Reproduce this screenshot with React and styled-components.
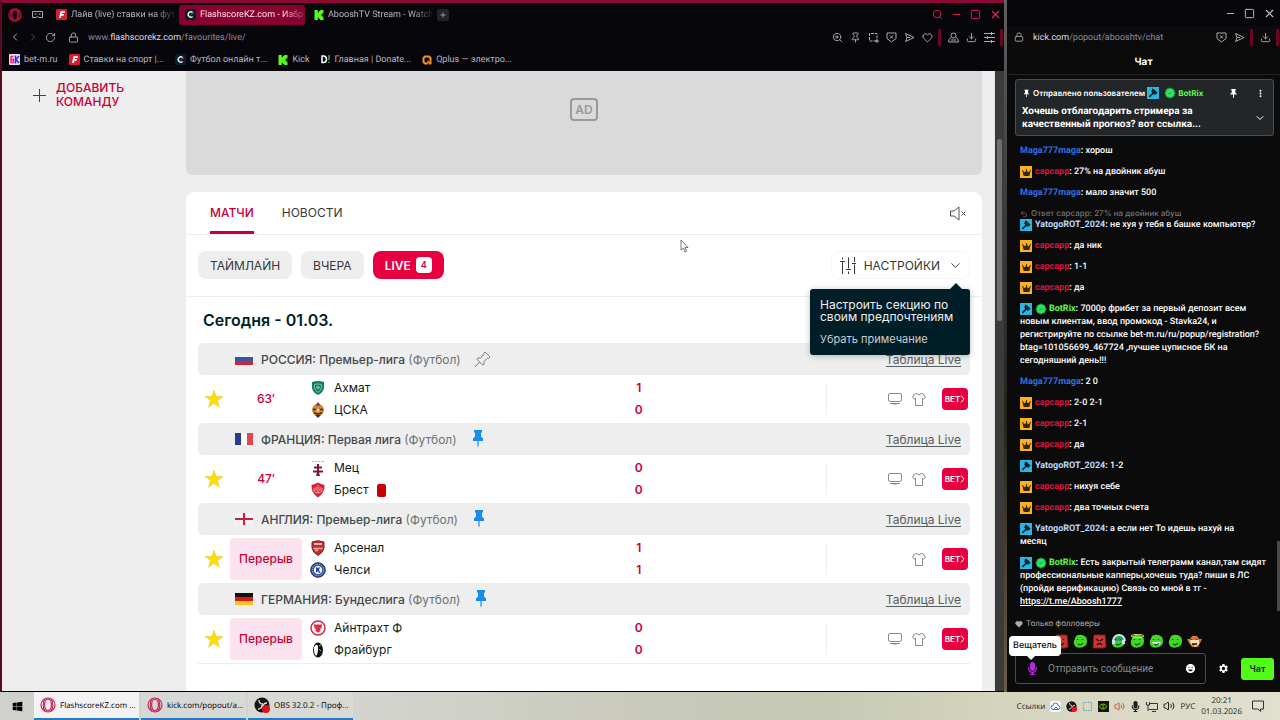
import React from 'react'
import styled, { createGlobalStyle, css } from 'styled-components'
import {
    BadgeCheck,
    ChevronDown,
    ChevronLeft,
    ChevronRight,
    Download,
    Heart,
    Lock,
    Minus,
    Pin,
    Plus,
    RotateCw,
    Search,
    Square,
    SquareDashed,
    Undo2,
    Volume2,
    X,
    ZoomIn,
} from 'lucide-react'
import { FaWindows } from 'react-icons/fa'
import { FaCrown, FaMicrophone } from 'react-icons/fa6'
import { MdEmojiEmotions, MdMoreVert, MdPushPin, MdSettings } from 'react-icons/md'

const GlobalStyle = createGlobalStyle`
    * {
        box-sizing: border-box;
    }
    body {
        margin: 0;
        font-family: Inter, 'Liberation Sans', sans-serif;
        background-color: #08080c;
        overflow: hidden;
    }
    button,
    input {
        font-family: inherit;
        border: none;
        padding: 0;
        background: none;
        cursor: pointer;
    }
    a {
        color: inherit;
        text-decoration: none;
    }
    svg {
        display: block;
        flex-shrink: 0;
    }
`

// Desktop
const Desktop = styled.div`
    min-height: 100vh;
    display: grid;
    grid-template-rows: minmax(0, 1fr) 28px;
`
const Windows = styled.div`
    display: grid;
    grid-template-columns: minmax(0, 1fr) 273px;
    gap: 3px;
    background: linear-gradient(#635f5d, #3a3d3c 30%, #24241c 60%, #6c5c45);
    max-height: calc(100vh - 28px);
`

// Browser window
const Browser = styled.section`
    display: flex;
    flex-direction: column;
    min-width: 0;
    min-height: 0;
    background-color: #07070b;
    border-left: 2px solid #5c0a24;
    border-top: 3px solid #8c0a35;
    border-bottom: 1px solid #000;
`
const TabBar = styled.div`
    height: 23px;
    display: flex;
    align-items: center;
    gap: 3px;
    padding: 0 2px 0 6px;
    color: #fa1e4e;
`
const BarStart = styled.div`
    width: 39px;
    display: flex;
    align-items: center;
    gap: 10px;
`
const Tab = styled.button`
    width: 126px;
    height: 20px;
    display: flex;
    align-items: center;
    gap: 4px;
    padding: 0 2px 0 6px;
    border-radius: 3px;
    text-align: left;
    color: ${(props) => (props.$active ? '#ffe0e8' : '#b9b6c6')};
    background-color: ${(props) => (props.$active ? '#87002f' : 'transparent')};
`
const TabText = styled.span`
    flex: 1;
    overflow: hidden;
    white-space: nowrap;
    font-family: Roboto, sans-serif;
    font-size: 9px;
    line-height: 14px;
    padding-top: 1px;
    text-rendering: geometricPrecision;
    mask-image: linear-gradient(90deg, #000 80%, rgba(0, 0, 0, 0.2));
`
const NewTab = styled.button`
    width: 12px;
    height: 12px;
    display: grid;
    place-items: center;
    border-radius: 2px;
    color: #c5c2d0;
    background-color: #23212c;
`
const BarEnd = styled.div`
    margin-left: auto;
    display: flex;
    align-items: center;
    gap: ${(props) => props.$gap || 7}px;
`
const IconButton = styled.button`
    display: grid;
    place-items: center;
    color: inherit;
`
const AddressBar = styled.div`
    height: 22px;
    display: flex;
    align-items: center;
    gap: 6px;
    padding: 0 1px 0 7px;
    color: #aeabba;
`
const Url = styled.a`
    margin-left: 3px;
    font-family: Roboto, sans-serif;
    font-size: 9px;
    line-height: 14px;
    padding-top: 1px;
    text-rendering: geometricPrecision;
    color: #8f88aa;
    b {
        font-weight: 400;
        color: #dcd9e6;
    }
`
const RedBar = styled.span`
    width: 3px;
    height: 17px;
    margin-left: -2px;
    border-radius: 1px;
    background-color: #6e0329;
`
const Bookmarks = styled.nav`
    height: 23px;
    display: flex;
    align-items: center;
    gap: 11px;
    padding: 0 7px;
`
const Bookmark = styled.a`
    display: flex;
    align-items: center;
    gap: 4px;
    font-family: Roboto, sans-serif;
    font-size: 9px;
    line-height: 14px;
    text-rendering: geometricPrecision;
    color: #b8b5c5;
    white-space: nowrap;
`

// Page
const Page = styled.div`
    flex: 1;
    min-height: 0;
    display: grid;
    grid-template-columns: 184px minmax(0, 1fr) 9px;
    background-color: #eee;
`
const Aside = styled.aside`
    padding: 10px 0 0 31px;
`
const AddTeam = styled.button`
    display: flex;
    align-items: center;
    gap: 10px;
    width: 110px;
    text-align: left;
    font-size: 12px;
    font-weight: 500;
    line-height: 14px;
    color: #c80037;
`
const Content = styled.main`
    min-width: 0;
    padding-right: 12px;
    display: flex;
    flex-direction: column;
    gap: 17px;
    border-right: 1px solid #e4e4e4;
`
const Ad = styled.div`
    height: 104px;
    display: grid;
    place-items: center;
    padding-bottom: 27px;
    border-radius: 0 0 6px 6px;
    background-color: #dadada;
`
const AdLabel = styled.span`
    padding: 0 3px;
    border: 2px solid #999;
    border-radius: 4px;
    font-size: 12px;
    font-weight: 600;
    line-height: 19px;
    color: #999;
`
const Card = styled.div`
    flex: 1;
    border-radius: 9px 9px 0 0;
    background-color: #fff;
`
const CardTabs = styled.div`
    height: 43px;
    display: flex;
    align-items: stretch;
    gap: 28px;
    padding: 0 15px 0 24px;
    border-bottom: 1px solid #eee;
`
const CardTab = styled.button`
    font-size: 12px;
    font-weight: ${(props) => (props.$active ? 500 : 400)};
    line-height: 36px;
    color: ${(props) => (props.$active ? '#c80037' : '#33383b')};
    border-top: 3px solid transparent;
    border-bottom: 3px solid ${(props) => (props.$active ? '#c80037' : 'transparent')};
`
const Filters = styled.div`
    height: 62px;
    display: flex;
    align-items: center;
    gap: 9px;
    padding: 0 12px 1px;
    border-bottom: 1px solid #eee;
`
const Filter = styled.button`
    height: 28px;
    display: flex;
    align-items: center;
    gap: 5px;
    padding: 0 12px;
    border-radius: 8px;
    font-size: 12px;
    font-weight: ${(props) => (props.$active ? 600 : 400)};
    color: ${(props) => (props.$active ? '#fff' : '#33383b')};
    background-color: ${(props) => (props.$active ? '#e6003f' : '#eee')};
`
const Count = styled.span`
    width: 16px;
    border-radius: 4px;
    font-size: 9px;
    line-height: 16px;
    color: #c80037;
    background-color: #fff;
`
const SettingsWrapper = styled.div`
    position: relative;
    margin-left: auto;
`
const Settings = styled.button`
    height: 28px;
    display: flex;
    align-items: center;
    gap: 8px;
    padding: 0 6px 0 8px;
    border: 1px solid #f5f5f5;
    border-radius: 8px;
    font-size: 12px;
    color: #33383b;
`
const Hint = styled.div`
    position: absolute;
    top: 38px;
    right: 0;
    width: 160px;
    padding: 10px 10px 8px;
    border-radius: 3px;
    background-color: #001e28;
    box-shadow: 0 1px 6px rgba(0, 0, 0, 0.25);
    font-size: 12px;
    line-height: 12px;
    color: #eee;
    z-index: 2;
    &::before {
        content: '';
        position: absolute;
        top: -6px;
        right: 8px;
        border: solid transparent;
        border-width: 0 6px 6px;
        border-bottom-color: #001e28;
    }
    p {
        margin: 0;
    }
`
const DismissHint = styled.button`
    margin-top: 8px;
    font-size: 11px;
    line-height: 16px;
    color: #c8cdd0;
`
const DayTitle = styled.h2`
    margin: 0;
    padding: 0 17px;
    font-size: 16px;
    font-weight: 600;
    line-height: 46px;
    color: #001e28;
`
const Leagues = styled.div`
    margin: 0 12px;
    border-bottom: 1px solid #eee;
`
const LeagueRow = styled.div`
    height: 32px;
    display: flex;
    align-items: center;
    gap: 8px;
    padding: 0 9px 0 37px;
    border-radius: 5px;
    background-color: #eee;
    font-size: 12px;
    color: #555e61;
    > a {
        margin-left: auto;
        text-decoration: underline;
        text-underline-offset: 2px;
    }
`
const LeagueName = styled.span`
    font-weight: 500;
    margin-right: 5px;
    color: #41494c;
    small {
        font-size: 12px;
        font-weight: 400;
        color: #6c7376;
    }
`
const MatchRow = styled.div`
    height: 48px;
    display: grid;
    grid-template-columns: 32px 72px minmax(0, 11fr) 16px minmax(0, 6fr) 144px;
    align-items: center;
    font-size: 12px;
    line-height: 22px;
    color: #101b20;
`
const StarButton = styled(IconButton)`
    color: #ffdc00;
`
const Stage = styled.span`
    height: 42px;
    display: grid;
    place-items: center;
    border-radius: 4px;
    font-weight: 500;
    color: #c80037;
    background-color: ${(props) => (props.$paused ? '#fae2ee' : 'transparent')};
`
const Team = styled.div`
    display: flex;
    align-items: center;
    gap: 8px;
    padding-left: 8px;
`
const RedCard = styled.span`
    width: 9px;
    height: 13px;
    border-radius: 2px;
    background-color: #c80000;
`
const Scores = styled.div`
    text-align: center;
    font-weight: 600;
    color: #c80037;
`
const MatchLinks = styled.div`
    grid-column: 6;
    height: 32px;
    display: flex;
    align-items: center;
    justify-content: flex-end;
    gap: 10px;
    padding-right: 2px;
    border-left: 1px solid #eee;
    color: #858c8e;
`
const Bet = styled.button`
    width: 26px;
    height: 22px;
    margin-left: 6px;
    display: flex;
    align-items: center;
    justify-content: center;
    border-radius: 4px;
    font-size: 8px;
    font-weight: 600;
    color: #fff;
    background-color: #e6003f;
`
const ScrollTrack = styled.div`
    padding-top: 68px;
    background-color: #3b3b3b;
`
const ScrollThumb = styled.div`
    width: 5px;
    height: 182px;
    margin: 0 auto;
    border-radius: 2px;
    background-color: #6f6f6f;
`

// Chat window
const Chat = styled.section`
    min-height: 0;
    display: flex;
    flex-direction: column;
    background-color: #0b0b0b;
    color: #fff;
    text-rendering: geometricPrecision;
`
const ChatControls = styled.div`
    height: 26px;
    display: flex;
    align-items: center;
    justify-content: flex-end;
    gap: 8px;
    padding-right: 4px;
    background-color: #07070b;
    color: #c7c4cf;
`
const ChatTitle = styled.h1`
    margin: 0;
    height: 27px;
    padding-top: 2px;
    text-align: center;
    font-size: 10px;
    font-weight: 700;
    line-height: 24px;
    border-bottom: 1px solid #242424;
`
const Pinned = styled.div`
    margin: 4px 6px 0 8px;
    padding: 5px 7px 4px 6px;
    border: 1px solid #4a4e52;
    border-radius: 3px;
    background-color: #232628;
    font-family: Roboto, sans-serif;
    font-size: 10px;
    font-weight: 700;
    line-height: 13px;
`
const PinnedHead = styled.div`
    height: 16px;
    display: flex;
    align-items: center;
    gap: 2px;
    margin-bottom: 4px;
    font-family: Inter, sans-serif;
    font-size: 8px;
    font-weight: 600;
`
const PinnedBody = styled.div`
    display: flex;
    align-items: center;
    justify-content: space-between;
    p {
        margin: 0;
        width: 190px;
    }
`
const PinnedActions = styled.span`
    margin-left: auto;
    display: flex;
    gap: 16px;
`
const Messages = styled.div`
    flex: 1;
    min-height: 0;
    overflow: hidden;
    display: flex;
    flex-direction: column;
    justify-content: flex-end;
    gap: 8px;
    padding: 0 7px 0 13px;
    border-right: 3px solid transparent;
    font-family: Roboto, sans-serif;
    font-size: 9px;
    font-weight: 500;
    line-height: 13px;
    white-space: pre-line;
`
const ReplyNote = styled.div`
    display: flex;
    align-items: center;
    gap: 3px;
    font-family: Inter, sans-serif;
    font-size: 8px;
    line-height: 11px;
    color: #757575;
`
const Nick = styled.b`
    font-weight: 700;
    color: ${(props) => props.$color};
`
const badgeBox = css`
    width: 12px;
    height: 12px;
    display: inline-grid;
    place-items: center;
    vertical-align: top;
`
const CrownBox = styled.span`
    ${badgeBox}
    margin-right: 3px;
    color: #3a2500;
    background-color: #f9b21d;
`
const HammerBox = styled.span`
    ${badgeBox}
    margin-right: 3px;
    color: #06202c;
    background-color: #2bb5e0;
`
const CheckBox = styled.span`
    ${badgeBox}
    margin-right: 2px;
`
const MessageLink = styled.a`
    text-decoration: underline;
`
const ChatFooter = styled.div`
    position: relative;
    padding: 8px 6px 8px 8px;
`
const FollowersOnly = styled.div`
    display: flex;
    align-items: center;
    gap: 3px;
    font-size: 8px;
    line-height: 13px;
    color: #a9acb0;
`
const Emotes = styled.div`
    display: flex;
    gap: 4px;
    height: 16px;
    margin: 3px 0 4px 39px;
    button {
        width: 15px;
    }
`
const SendRow = styled.form`
    display: flex;
    align-items: center;
    gap: 12px;
`
const MessageBox = styled.div`
    flex: 1;
    min-width: 0;
    height: 31px;
    display: flex;
    align-items: center;
    gap: 9px;
    padding: 0 9px 0 10px;
    border: 1px solid #4a4d50;
    border-radius: 3px;
    input {
        flex: 1;
        min-width: 0;
        outline: none;
        font-family: Roboto, sans-serif;
        font-size: 10px;
        color: #fff;
    }
    input::placeholder {
        color: #85888c;
        opacity: 1;
    }
`
const SendButton = styled.button`
    width: 33px;
    height: 22px;
    border-radius: 3px;
    font-size: 9px;
    font-weight: 600;
    color: #0b2600;
    background-color: #53fc18;
`
const RoleHint = styled.div`
    position: absolute;
    top: 27px;
    left: 2px;
    padding: 0 4px;
    border-radius: 4px;
    font-size: 9px;
    font-weight: 500;
    line-height: 20px;
    color: #111;
    background-color: #fff;
    &::after {
        content: '';
        position: absolute;
        top: 20px;
        left: 18px;
        border: solid transparent;
        border-width: 4px 4px 0;
        border-top-color: #fff;
    }
`
const ChatScroll = styled.span`
    position: absolute;
    top: -68px;
    right: 0;
    width: 3px;
    height: 70px;
    background-color: #494949;
`

// Taskbar
const Taskbar = styled.footer`
    display: flex;
    align-items: stretch;
    background: linear-gradient(90deg, #cfd1cd, #d3d4cf 28%, #c9cabb 50%, #c5c9b4 64%, #d5d4bd 78%, #e1dfce);
    font-family: 'Open Sans', 'Noto Sans', sans-serif;
    font-size: 8px;
    text-rendering: geometricPrecision;
    color: #1c1c1c;
`
const StartButton = styled(IconButton)`
    width: 34px;
    color: #000;
`
const TaskButton = styled.button`
    width: 105px;
    margin-right: 2px;
    display: flex;
    align-items: center;
    gap: 4px;
    padding-left: 6px;
    font-size: 8px;
    text-rendering: geometricPrecision;
    white-space: nowrap;
    border-bottom: 2px solid #2878c8;
    background-color: ${(props) => (props.$active ? '#f2f3f2' : 'rgba(255, 255, 255, 0.15)')};
`
const Tray = styled.div`
    margin-left: auto;
    display: flex;
    align-items: center;
    gap: 5px;
    padding-right: 16px;
`
const Clock = styled.time`
    margin: 0 5px 0 1px;
    text-align: center;
    line-height: 11px;
`
const Pointer = styled.svg`
    position: fixed;
    left: 680px;
    top: 239px;
    z-index: 5;
`

// Logos and small drawings
const OperaLogo = ({ size = 14, color = '#d3123f' }) => (
    <svg width={size} height={size} viewBox="0 0 16 16" fill="none" stroke={color} strokeWidth="1.2">
        <circle cx="8" cy="8" r="7" />
        <ellipse cx="8" cy="8" rx="3.4" ry="5.8" />
        <path d="M5 1.9C2.6 5 2.6 11 5 14.1M11 1.9c2.4 3.1 2.4 9.1 0 12.2" />
    </svg>
)

const GameIcon = () => (
    <svg width="11" height="10" viewBox="0 0 11 10" fill="none" stroke="#aaa7b7">
        <path d="M.5 1.500h10v6H7L5.500 6.500 4 7.500H.5z" />
        <path d="M2.500 4h2M6.500 4h2" />
    </svg>
)

const PlaneIcon = () => (
    <svg width="11" height="11" viewBox="0 0 11 11" fill="none" stroke="currentColor" strokeLinejoin="round">
        <path d="M1.500 1.500 10 5.500l-8.500 4 1.500-4zM3 5.500h3" />
    </svg>
)

const ShieldIcon = () => (
    <svg width="11" height="11" viewBox="0 0 11 11" fill="none" stroke="currentColor">
        <path d="M1 1h9v5.500L5.500 10 1 6.500zM4 3.500l3 3M7 3.500l-3 3" />
    </svg>
)

const SnapshotIcon = () => (
    <svg width="11" height="11" viewBox="0 0 11 11" fill="none" stroke="currentColor">
        <path d="M8.500 9H1.500V1.500h7.500V7" strokeDasharray="3 1" />
        <path d="M7 9h4M9 7v4" />
    </svg>
)

const ProfileIcon = () => (
    <svg width="11" height="11" viewBox="0 0 11 11" fill="none" stroke="currentColor">
        <circle cx="5.500" cy="3.500" r="2.500" />
        <path d="M3 5.500.8 7.500v2.500h9.400V7.500L8 5.500M3 8h5" />
    </svg>
)

const Favicon = ({ type }) => {
    if (type === 'fonbet') {
        return (
            <svg width="11" height="11" viewBox="0 0 11 11">
                <rect width="11" height="11" rx="1.500" fill="#d91e33" />
                <path d="M3 9 4.500 2.200H9L8.600 4H6l-.3 1.100h2.300L7.600 6.700H5.300L4.800 9z" fill="#fff" />
            </svg>
        )
    }
    if (type === 'flash') {
        return (
            <svg width="11" height="11" viewBox="0 0 11 11">
                <rect width="11" height="11" rx="2" fill="#06202a" />
                <path d="M7.600 3.600A2.600 2.600 0 1 0 7.600 7.400" fill="none" stroke="#eee" strokeWidth="1.400" />
                <path d="M6 5.500 9 3.700" stroke="#d91e53" />
            </svg>
        )
    }
    if (type === 'kick') {
        return (
            <svg width="10" height="10" viewBox="0 0 10 10" fill="#53fc18">
                <path d="M.5 0h3.300v2.300H5V1.100h1.200V0h3.300v3.300H8.300v1.200H7.200v1.100h1.100v1.100h1.200V10H6.200V8.900H5V7.700H3.800V10H.5z" />
            </svg>
        )
    }
    if (type === 'bet') {
        return (
            <svg width="11" height="11" viewBox="0 0 11 11">
                <rect width="11" height="11" rx="1" fill="#e9ddff" />
                <path d="M4.500 2.500H2v6h2.500v-3H2" fill="none" stroke="#ee2456" strokeWidth="1.400" />
                <path d="M6.500 1.500v8M10 2 7 5.500 10 9" fill="none" stroke="#4123d8" strokeWidth="1.500" />
            </svg>
        )
    }
    if (type === 'donate') {
        return (
            <svg width="10" height="9" viewBox="0 0 10 9" fill="none">
                <path d="M1 1v6.500h1.500c4 0 4-6.500 0-6.500z" stroke="#fff" strokeWidth="1.500" />
                <path d="M8 0v5M8 6.500V8" stroke="#20a447" strokeWidth="1.700" />
            </svg>
        )
    }
    return (
        <svg width="10" height="10" viewBox="0 0 10 10" fill="none">
            <path d="M6 8.500H3L1.500 7V3L3 1.500h4L8.500 3v6" stroke="#f7931e" strokeWidth="2" />
            <path d="m5.500 6 3 3.500" stroke="#f7931e" strokeWidth="1.500" />
        </svg>
    )
}

const Hammer = () => (
    <svg width="10" height="10" viewBox="0 0 10 10" fill="currentColor">
        <path d="M4.300.6 6 1.200l3.300 3-.2 1.600-1.300-.4-.7 1.800-1.500-1.500L2 9.400.7 8.300l3.800-3.500-1.300-1.100z" />
    </svg>
)

const Badge = ({ type }) => {
    if (type === 'crown') {
        return (
            <CrownBox>
                <FaCrown size={9} />
            </CrownBox>
        )
    }
    if (type === 'hammer') {
        return (
            <HammerBox>
                <Hammer />
            </HammerBox>
        )
    }
    return (
        <CheckBox>
            <BadgeCheck size={12} fill="#2ee563" stroke="#1b9440" strokeWidth={2} />
        </CheckBox>
    )
}

const Flag = ({ country }) => (
    <svg width="18" height="12" viewBox="0 0 18 12">
        <rect width="18" height="12" fill={country === 'en' || country === 'ru' ? '#f4f4f4' : '#fff'} />
        {country === 'ru' && (
            <>
                <path fill="#3757a6" d="M0 4h18v4H0z" />
                <path fill="#d32338" d="M0 8h18v4H0z" />
            </>
        )}
        {country === 'fr' && (
            <>
                <path fill="#2a3b8f" d="M0 0h6v12H0z" />
                <path fill="#e4444d" d="M12 0h6v12h-6z" />
            </>
        )}
        {country === 'en' && <path fill="#d01c3c" d="M8 0h2v5h8v2h-8v5H8V7H0V5h8z" />}
        {country === 'de' && (
            <>
                <path fill="#111" d="M0 0h18v4H0z" />
                <path fill="#d51a1a" d="M0 4h18v4H0z" />
                <path fill="#fbc21a" d="M0 8h18v4H0z" />
            </>
        )}
    </svg>
)

const Crest = ({ club }) => (
    <svg width="16" height="16" viewBox="0 0 16 16">
        {club === 'akhmat' && (
            <>
                <path d="M2 2q6-2 12 0v6q-1 5-6 7-5-2-6-7z" fill="#12805c" />
                <path
                    d="M4.500 4.500q3.500-1 7 0v3.500q-1 3-3.500 4.500Q5.500 11 4.500 8z"
                    fill="none"
                    stroke="#a8dcc6"
                    strokeWidth=".7"
                />
                <circle cx="8" cy="7.500" r="1.800" fill="#74bd9f" />
            </>
        )}
        {club === 'cska' && (
            <>
                <circle cx="8" cy="8" r="6" fill="#c98a3a" />
                <path d="m8 0 2.500 3.500h-5z" fill="#8f2a20" />
                <path d="M3 7.500h10M4 10.500q4 3 8 0" stroke="#5a2216" strokeWidth="1.500" fill="none" />
                <circle cx="8" cy="8" r="1.800" fill="#f0d3a8" />
                <path d="M5 13h6l-3 3z" fill="#3a2a4c" />
            </>
        )}
        {club === 'metz' && (
            <>
                <path d="M2 1.500h2M5 1.500h2M8 1.500h2M11 1.500h3" stroke="#999" strokeWidth=".7" />
                <path d="M7 4h2v2.500h3v2H9v2h4v2H9L10 16H6l1-3.500H3v-2h4v-2H4v-2h3z" fill="#7d1830" />
            </>
        )}
        {club === 'brest' && (
            <>
                <path d="M1.500 3Q5 2 8 .5 11 2 14.500 3 15 11 8 15.500 1 11 1.500 3z" fill="#d8203a" />
                <path
                    d="M8 3v8M4 6v3q1 2 4 2t4-2V6M6 5v4M10 5v4"
                    stroke="#f8c4c8"
                    strokeWidth=".8"
                    fill="none"
                />
            </>
        )}
        {club === 'arsenal' && (
            <>
                <path d="M2 2q6-2.500 12 0v6q-1 5-6 7.500Q3 13 2 8z" fill="#c92a2f" stroke="#6b2a3c" />
                <path d="M4 4h8" stroke="#fff" strokeWidth="1.300" />
                <path d="M3.500 8.500h9M5 10.500h3" stroke="#f0b48c" strokeWidth="1.500" />
            </>
        )}
        {club === 'chelsea' && (
            <>
                <circle cx="8" cy="8" r="7.300" fill="#23479c" stroke="#1a2c5c" />
                <circle cx="8" cy="8" r="5.800" fill="none" stroke="#c8c0d0" strokeDasharray="1.500 1" />
                <circle cx="8" cy="8" r="4.300" fill="#f2f4fb" />
                <path d="m6 5 2 1 2-1-1 3 1.500 3H9L8 9l-2 2V8z" fill="#23479c" />
            </>
        )}
        {club === 'eintracht' && (
            <>
                <circle cx="8" cy="8" r="7" fill="#fff" stroke="#cf2644" strokeWidth="1.500" />
                <path
                    d="M8 3.500 9 5l2.500-1 1 3-1.500-.5L12 9l-2-.5.500 2.500L8 12.800 5.500 11l.5-2.500L4 9l1-2.500L3.500 7l1-3L7 5z"
                    fill="#d9304c"
                />
            </>
        )}
        {club === 'freiburg' && (
            <>
                <ellipse cx="8" cy="8" rx="5" ry="7.500" fill="#111" />
                <path d="M4 5q4-5 4 1t-2 8Q3.500 11 4 5z" fill="#fff" />
                <path d="m9 4 2-1M9 7l2 2" stroke="#aaa" />
            </>
        )}
    </svg>
)

const Star = () => (
    <svg width="20" height="20" viewBox="0 0 20 20">
        <path
            d="m10 1 2.200 6.500H19l-5.500 4.100 2 6.800L10 14.300l-5.500 4.100 2-6.800L1 7.500h6.800z"
            fill="#ffdc00"
            stroke="#d9c452"
            strokeWidth=".5"
        />
    </svg>
)

const LeaguePin = ({ active }) =>
    active ? (
        <svg width="16" height="18" viewBox="0 0 16 18" fill="#1a8cf0">
            <path d="M4 0h8v2.500h-1v4l2 2v2.500H8.600V16L8 17.500 7.400 16v-5H3V8.500l2-2v-4H4z" />
        </svg>
    ) : (
        <svg width="17" height="17" viewBox="0 0 17 17" fill="none" stroke="#777d80">
            <path d="m11 1 5 5-1.500 1.500-1-.3L10 10.500v2.800L8.700 14 3 8.300 4 7h2.500L9.800 3.500l-.3-1zM5.700 11 1 16" />
        </svg>
    )

const Tv = () => (
    <svg width="14" height="12" viewBox="0 0 14 12" fill="none" stroke="currentColor">
        <rect x=".5" y=".5" width="13" height="8" rx="1.500" />
        <path d="M2 10.500h10" />
        <path d="M5 11.500h4" opacity=".5" />
    </svg>
)

const Shirt = () => (
    <svg width="14" height="13" viewBox="0 0 14 13" fill="none" stroke="currentColor">
        <path d="M4.500.5Q7 3 9.500.5l2 .5 2 3.500-2 1.500-1-.8v7.300h-7V5.200l-1 .8-2-1.500L2.500 1z" />
    </svg>
)

const Sliders = () => (
    <svg width="16" height="17" viewBox="0 0 16 17" fill="none" stroke="#33383b">
        <path d="M2.500.5v2M2.500 5v12M8.500.5v11M8.500 14.500V17M14.500 0v5M14.500 7.500V17M0 4.500h5M6 12.500h5M12 6.500h4" />
    </svg>
)

const Muted = () => (
    <svg width="17" height="15" viewBox="0 0 17 15" fill="none" stroke="#4b5255">
        <path d="M.5 5v5H4l5 4V1L4 5zM11.500 5.500l4 4M15.500 5.500l-4 4" />
    </svg>
)

const Emote = ({ type }) => {
    const red = type === 'angry' || type === 'wall'
    const body = red ? '#c93730' : '#42d626'
    return (
        <svg width="15" height="15" viewBox="0 0 15 15">
            {red && <path d="M2 1h11l1 12-3 1H1z" fill={body} stroke="#7c221f" />}
            {type === 'monkey' && (
                <>
                    <path d="M0 5h3l2-3h5l2 3h3l-2 4-2 4H5L2 9z" fill="#d87438" />
                    <path d="M3 6h9v4l-4 3-4-3z" fill="#f7e2bd" />
                    <path d="M5 10h5" stroke="#b81e20" strokeWidth="2" />
                </>
            )}
            {!red && type !== 'monkey' && <path d="M3 2q5-3 10 1 2 4 0 8-4 4-10 2-3-3-2-6z" fill={body} />}
            {type === 'halo' && <ellipse cx="7.500" cy="2" rx="6.500" ry="1.500" fill="none" stroke="#f2d577" />}
            {type === 'headset' && (
                <>
                    <path d="M2 7q1-6 6-6t6 6" fill="#2a9c68" stroke="#c5e6df" strokeWidth="2" />
                    <path d="M1 6h3v4H1zM11 6h3v4h-3z" fill="#d6dff2" />
                </>
            )}
            {type === 'teeth' && <path d="M3 8h9l-2 3H5z" fill="#e8ffe1" />}
            <path
                d={type === 'angry' ? 'm4 5 3 2M11 5 8 7M5 11q2.500-3 5 0' : 'M4.500 5v1M9.500 5v1M5 10q3 2 5-1'}
                fill="none"
                stroke={red ? '#2c0807' : '#0d5410'}
                strokeWidth="1.300"
            />
        </svg>
    )
}

const ObsLogo = ({ size }) => (
    <svg width={size} height={size} viewBox="0 0 16 16">
        <circle cx="8" cy="8" r="7.500" fill="#161616" />
        <path d="M5 3q0 4 4 4M13 6q-4 0-4 4M4 12q4 0 4-4" fill="none" stroke="#ddd" strokeWidth="1.300" />
        <circle cx="12" cy="12" r="4" fill="#e3101e" />
    </svg>
)

// Data
const tabs = [
    { icon: 'fonbet', text: 'Лайв (live) ставки на фут' },
    { icon: 'flash', text: 'FlashscoreKZ.com - Избр', active: true },
    { icon: 'kick', text: 'AbooshTV Stream - Watch' },
]

const bookmarks = [
    { icon: 'bet', text: 'bet-m.ru' },
    { icon: 'fonbet', text: 'Ставки на спорт |...' },
    { icon: 'flash', text: 'Футбол онлайн т...' },
    { icon: 'kick', text: 'Kick' },
    { icon: 'donate', text: 'Главная | Donate...' },
    { icon: 'qplus', text: 'Qplus — электро...' },
]

const leagues = [
    {
        country: 'ru',
        name: 'РОССИЯ: Премьер-лига',
        stage: '63′',
        home: { crest: 'akhmat', name: 'Ахмат', score: 1 },
        away: { crest: 'cska', name: 'ЦСКА', score: 0 },
        tv: true,
    },
    {
        country: 'fr',
        name: 'ФРАНЦИЯ: Первая лига',
        pinned: true,
        stage: '47′',
        home: { crest: 'metz', name: 'Мец', score: 0 },
        away: { crest: 'brest', name: 'Брест', score: 0, redCard: true },
        tv: true,
    },
    {
        country: 'en',
        name: 'АНГЛИЯ: Премьер-лига',
        pinned: true,
        stage: 'Перерыв',
        home: { crest: 'arsenal', name: 'Арсенал', score: 1 },
        away: { crest: 'chelsea', name: 'Челси', score: 1 },
    },
    {
        country: 'de',
        name: 'ГЕРМАНИЯ: Бундеслига',
        pinned: true,
        stage: 'Перерыв',
        home: { crest: 'eintracht', name: 'Айнтрахт Ф', score: 0 },
        away: { crest: 'freiburg', name: 'Фрайбург', score: 0 },
        tv: true,
    },
]

const users = {
    Maga777maga: { color: '#2f6fe0', badges: [] },
    capcapp: { color: '#d4143c', badges: ['crown'] },
    YatogoROT_2024: { color: '#bcd7ff', badges: ['hammer'] },
    BotRix: { color: '#5dfb4c', badges: ['hammer', 'check'] },
}

const messages = [
    { user: 'Maga777maga', text: 'хорош' },
    { user: 'capcapp', text: '27% на двойник абуш' },
    { user: 'Maga777maga', text: 'мало значит 500' },
    {
        user: 'YatogoROT_2024',
        text: 'не хуя у тебя в башке компьютер?',
        reply: 'Ответ capcapp: 27% на двойник абуш',
    },
    { user: 'capcapp', text: 'да ник' },
    { user: 'capcapp', text: '1-1' },
    { user: 'capcapp', text: 'да' },
    {
        user: 'BotRix',
        text: '7000р фрибет за первый депозит всем новым клиентам, ввод промокод - Stavka24, и регистрируйте по ссылке bet-m.ru/ru/popup/registration?btag=101056699_467724 ,лучшее цуписное БК на сегодняшний день!!!',
    },
    { user: 'Maga777maga', text: '2 0' },
    { user: 'capcapp', text: '2-0 2-1' },
    { user: 'capcapp', text: '2-1' },
    { user: 'capcapp', text: 'да' },
    { user: 'YatogoROT_2024', text: '1-2' },
    { user: 'capcapp', text: 'нихуя себе' },
    { user: 'capcapp', text: 'два точных счета' },
    { user: 'YatogoROT_2024', text: 'а если нет То идешь нахуй на\nмесяц' },
    {
        user: 'BotRix',
        text: 'Есть закрытый телеграмм канал,там сидят профессиональные капперы,хочешь туда? пиши в ЛС (пройди верификацию) Связь со мной в тг - ',
        link: 'https://t.me/Aboosh1777',
    },
]

const emotes = ['wall', 'smile', 'angry', 'headset', 'halo', 'teeth', 'think', 'monkey']

const TeamLine = ({ team }) => (
    <Team>
        <Crest club={team.crest} />
        {team.name}
        {team.redCard && <RedCard />}
    </Team>
)

const League = ({ league }) => (
    <section>
        <LeagueRow>
            <Flag country={league.country} />
            <LeagueName>
                {league.name} <small>(Футбол)</small>
            </LeagueName>
            <IconButton aria-label="Закрепить">
                <LeaguePin active={league.pinned} />
            </IconButton>
            <a href="#table">Таблица Live</a>
        </LeagueRow>
        <MatchRow>
            <StarButton aria-label="Избранное">
                <Star />
            </StarButton>
            <Stage $paused={league.stage === 'Перерыв'}>{league.stage}</Stage>
            <div>
                <TeamLine team={league.home} />
                <TeamLine team={league.away} />
            </div>
            <Scores>
                <div>{league.home.score}</div>
                <div>{league.away.score}</div>
            </Scores>
            <MatchLinks>
                {league.tv && <Tv />}
                <Shirt />
                <Bet>
                    BET
                    <svg width="5" height="8" viewBox="0 0 5 8" fill="none" stroke="#fff">
                        <path d="m1 .5 3 3.500-3 3.500" />
                    </svg>
                </Bet>
            </MatchLinks>
        </MatchRow>
    </section>
)

const Message = ({ message }) => {
    const user = users[message.user]
    return (
        <div>
            {message.reply && (
                <ReplyNote>
                    <Undo2 size={8} />
                    {message.reply}
                </ReplyNote>
            )}
            {user.badges.map((badge) => (
                <Badge key={badge} type={badge} />
            ))}
            <Nick $color={user.color}>{message.user}</Nick>
            <b>:</b> {message.text}
            {message.link && <MessageLink href={message.link}>{message.link}</MessageLink>}
        </div>
    )
}

const BrowserWindow = () => (
    <Browser>
        <TabBar>
            <BarStart>
                <OperaLogo />
                <GameIcon />
            </BarStart>
            {tabs.map((tab) => (
                <Tab key={tab.icon} $active={tab.active}>
                    <Favicon type={tab.icon} />
                    <TabText>{tab.text}</TabText>
                </Tab>
            ))}
            <NewTab aria-label="Новая вкладка">
                <Plus size={8} />
            </NewTab>
            <BarEnd $gap={8}>
                <Search size={11} />
                <Minus size={11} />
                <Square size={11} />
                <X size={13} />
            </BarEnd>
        </TabBar>
        <AddressBar>
            <ChevronLeft size={12} />
            <ChevronRight size={12} opacity={0.4} />
            <RotateCw size={11} />
            <span />
            <Lock size={11} />
            <Url href="#favourites">
                www.<b>flashscorekz.com</b>/favourites/live/
            </Url>
            <BarEnd>
                <ZoomIn size={11} />
                <Pin size={11} />
                <SnapshotIcon />
                <ShieldIcon />
                <PlaneIcon />
                <Heart size={11} />
                <RedBar />
                <ProfileIcon />
                <Download size={11} />
                <svg width="11" height="11" viewBox="0 0 11 11" fill="none" stroke="currentColor">
                    <path d="M0 1.500h11M0 5.500h11M0 9.500h11M7.500 0v3M3.500 4v3M7.500 8v3" />
                </svg>
                <RedBar />
            </BarEnd>
        </AddressBar>
        <Bookmarks>
            {bookmarks.map((bookmark) => (
                <Bookmark key={bookmark.text} href="#bookmark">
                    <Favicon type={bookmark.icon} />
                    {bookmark.text}
                </Bookmark>
            ))}
        </Bookmarks>
        <Page>
            <Aside>
                <AddTeam>
                    <svg width="13" height="13" viewBox="0 0 13 13" stroke="#c80037">
                        <path d="M6.500 0v13M0 6.500h13" />
                    </svg>
                    ДОБАВИТЬ КОМАНДУ
                </AddTeam>
            </Aside>
            <Content>
                <Ad>
                    <AdLabel>AD</AdLabel>
                </Ad>
                <Card>
                    <CardTabs>
                        <CardTab $active>МАТЧИ</CardTab>
                        <CardTab>НОВОСТИ</CardTab>
                        <BarEnd>
                            <IconButton aria-label="Звук">
                                <Muted />
                            </IconButton>
                        </BarEnd>
                    </CardTabs>
                    <Filters>
                        <Filter>ТАЙМЛАЙН</Filter>
                        <Filter>ВЧЕРА</Filter>
                        <Filter $active>
                            LIVE <Count>4</Count>
                        </Filter>
                        <SettingsWrapper>
                            <Settings>
                                <Sliders />
                                НАСТРОЙКИ
                                <ChevronDown size={15} strokeWidth={1.5} />
                            </Settings>
                            <Hint>
                                <p>Настроить секцию по своим предпочтениям</p>
                                <DismissHint>Убрать примечание</DismissHint>
                            </Hint>
                        </SettingsWrapper>
                    </Filters>
                    <DayTitle>Сегодня - 01.03.</DayTitle>
                    <Leagues>
                        {leagues.map((league) => (
                            <League key={league.country} league={league} />
                        ))}
                    </Leagues>
                </Card>
            </Content>
            <ScrollTrack>
                <ScrollThumb />
            </ScrollTrack>
        </Page>
    </Browser>
)

const ChatWindow = () => (
    <Chat>
        <ChatControls>
            <Minus size={11} />
            <Square size={11} />
            <X size={13} />
        </ChatControls>
        <AddressBar>
            <Lock size={10} />
            <Url href="#popout">
                <b>kick.com</b>/popout/abooshtv/chat
            </Url>
            <BarEnd>
                <ShieldIcon />
                <PlaneIcon />
                <RedBar />
                <Download size={11} />
                <RedBar />
            </BarEnd>
        </AddressBar>
        <ChatTitle>Чат</ChatTitle>
        <Pinned>
            <PinnedHead>
                <MdPushPin size={9} />
                Отправлено пользователем
                <HammerBox>
                    <Hammer />
                </HammerBox>
                <BadgeCheck size={12} fill="#2ee563" stroke="#1b9440" />
                <Nick $color="#5dfb4c">BotRix</Nick>
                <PinnedActions>
                    <MdPushPin size={11} />
                    <MdMoreVert size={11} />
                </PinnedActions>
            </PinnedHead>
            <PinnedBody>
                <p>Хочешь отблагодарить стримера за качественный прогноз? вот ссылка...</p>
                <ChevronDown size={12} />
            </PinnedBody>
        </Pinned>
        <Messages>
            {messages.map((message, i) => (
                <Message key={i} message={message} />
            ))}
        </Messages>
        <ChatFooter>
            <ChatScroll />
            <FollowersOnly>
                <Heart size={8} fill="currentColor" />
                Только фолловеры
            </FollowersOnly>
            <Emotes>
                {emotes.map((emote) => (
                    <button key={emote} aria-label={emote}>
                        <Emote type={emote} />
                    </button>
                ))}
            </Emotes>
            <SendRow>
                <MessageBox>
                    <FaMicrophone size={13} color="#b52be8" />
                    <input aria-label="Отправить сообщение" placeholder="Отправить сообщение" />
                    <MdEmojiEmotions size={11} />
                </MessageBox>
                <IconButton type="button" aria-label="Настройки чата">
                    <MdSettings size={11} color="#fff" />
                </IconButton>
                <SendButton type="button">Чат</SendButton>
            </SendRow>
            <RoleHint>Вещатель</RoleHint>
        </ChatFooter>
    </Chat>
)

const App = () => (
    <>
        <GlobalStyle />
        <Desktop>
            <Windows>
                <BrowserWindow />
                <ChatWindow />
            </Windows>
            <Taskbar>
                <StartButton aria-label="Пуск">
                    <FaWindows size={11} />
                </StartButton>
                <TaskButton $active>
                    <OperaLogo size={16} color="#c22a5a" />
                    FlashscoreKZ.com ...
                </TaskButton>
                <TaskButton>
                    <OperaLogo size={16} color="#c22a5a" />
                    kick.com/popout/a...
                </TaskButton>
                <TaskButton>
                    <ObsLogo size={16} />
                    OBS 32.0.2 - Проф...
                </TaskButton>
                <Tray>
                    Ссылки
                    <svg width="11" height="11" viewBox="0 0 11 11">
                        <rect width="11" height="11" rx="2" fill="#f4f9ff" />
                        <path
                            d="M3 8.500a2 2 0 0 1 0-4 2.500 2.500 0 0 1 5 0 2 2 0 0 1 0 4zM4 8l2-2 2 2"
                            fill="none"
                            stroke="#2f79d0"
                        />
                    </svg>
                    <ObsLogo size={11} />
                    <SquareDashed size={11} color="#4b91b9" />
                    <svg width="11" height="11" viewBox="0 0 11 11">
                        <rect width="11" height="11" fill="#141814" />
                        <path d="M1 5.500q4-5 8 0-4 5-8 0zM5 3v5" fill="none" stroke="#76b900" />
                    </svg>
                    <Volume2 size={11} color="#b54a38" />
                    <FaMicrophone size={11} />
                    <svg width="12" height="11" viewBox="0 0 12 11" fill="none" stroke="#333">
                        <path d="M3 2.500h8.500v6H3M6 10.500h4M.5 1v3h3V1M2 4v6" />
                    </svg>
                    <Volume2 size={12} />
                    РУС
                    <Clock>
                        20:21
                        <br />
                        01.03.2026
                    </Clock>
                    <svg width="12" height="12" viewBox="0 0 12 12" fill="none" stroke="#333">
                        <path d="M.5 1h11v8H8.500v2.500L6 9H.5z" />
                    </svg>
                </Tray>
            </Taskbar>
        </Desktop>
        <Pointer width="9" height="14" viewBox="0 0 9 14" fill="#fff" stroke="#555">
            <path d="M1 1v10l2.500-2L5 13l1.500-.6L5 8.500h3z" strokeWidth=".8" />
        </Pointer>
    </>
)

export default App
